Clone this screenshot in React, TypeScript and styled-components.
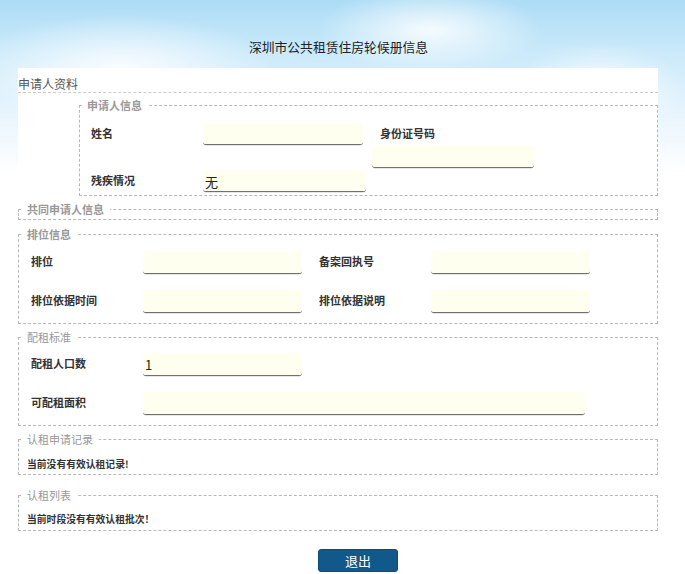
import styled, { createGlobalStyle } from 'styled-components';

const GlobalStyle = createGlobalStyle`
  html, body {
    margin: 0;
    padding: 0;
  }
  body {
    font-family: "Noto Sans CJK SC", "Noto Sans", sans-serif;
    color: #333;
    background-color: #fff;
    background-image:
      radial-gradient(ellipse 160px 60px at 430px 30px, rgba(255,255,255,0.85), rgba(255,255,255,0) 70%),
      radial-gradient(ellipse 120px 70px at 600px 90px, rgba(255,255,255,0.8), rgba(255,255,255,0) 70%),
      radial-gradient(ellipse 220px 80px at 120px 70px, rgba(255,255,255,0.9), rgba(255,255,255,0) 70%),
      linear-gradient(180deg, #acdcf6 0px, #c9e9fa 50px, #e8f5fd 115px, #ffffff 175px);
    background-repeat: no-repeat;
  }
`;

const Page = styled.div`
  width: 685px;
  min-height: 574px;
`;

const Title = styled.h1`
  margin: 0;
  padding: 38px 8px 0 0;
  height: 30px;
  line-height: 18px;
  text-align: center;
  font-size: 12.8px;
  font-weight: normal;
  color: #222;
`;

const Panel = styled.div`
  margin-left: 18px;
  width: 640px;
  background: #fff;
`;

const SectionHead = styled.div`
  padding-top: 8px;
  line-height: 16px;
  font-size: 12px;
  color: #555;
  border-bottom: 1px dashed #ccc;
`;

const Group = styled.fieldset<{ $indent?: number; $top: number; $pad: string }>`
  margin: ${(p) => p.$top}px 0 0 ${(p) => p.$indent ?? 0}px;
  padding: ${(p) => p.$pad};
  border: 1px dashed #b8b8b8;
  min-width: 0;
`;

const Legend = styled.legend<{ $bold?: boolean; $offset?: number }>`
  margin-left: ${(p) => p.$offset ?? 4}px;
  padding: 0 6px 0 4px;
  line-height: 14px;
  font-size: 11px;
  font-weight: ${(p) => (p.$bold ? 'bold' : 'normal')};
  color: #999;
`;

const Body = styled.div<{ $left: number }>`
  padding-left: ${(p) => p.$left}px;
`;

const Row = styled.div<{ $gap?: number }>`
  display: flex;
  align-items: flex-start;
  margin-top: ${(p) => p.$gap ?? 0}px;
`;

const Label = styled.div<{ $width?: number; $indent?: number }>`
  width: ${(p) => p.$width ?? 112}px;
  padding-left: ${(p) => p.$indent ?? 0}px;
  box-sizing: border-box;
  height: 22px;
  line-height: 20px;
  font-size: 11px;
  font-weight: bold;
  color: #333;
  flex-shrink: 0;
`;

const Field = styled.div<{ $width: number; $height?: number }>`
  width: ${(p) => p.$width}px;
  height: ${(p) => p.$height ?? 23}px;
  box-sizing: border-box;
  background: #fffff0;
  border-bottom: 1px solid #6f6f6f;
  border-radius: 3px;
  box-shadow: 0 1px 0 -0.5px #cfcfcf;
  padding: 3px 2px 0 2px;
  line-height: 18px;
  font-size: 13px;
  color: #222;
  flex-shrink: 0;
`;

const Stack = styled.div`
  display: flex;
  flex-direction: column;
  margin-left: 9px;
`;

const Notice = styled.div`
  padding-left: 8px;
  line-height: 16px;
  font-size: 9.8px;
  font-weight: bold;
  color: #333;
`;

const Footer = styled.div`
  display: flex;
  margin-top: 18px;
  padding-left: 318px;
`;

const ExitButton = styled.button`
  width: 80px;
  height: 23px;
  border: 1px solid #0b4d78;
  border-radius: 3px;
  background: #10598a;
  color: #fff;
  font-family: inherit;
  font-size: 13px;
  line-height: 20px;
  padding: 0;
  cursor: pointer;
`;

export default function App() {
  return (
    <>
      <GlobalStyle />
      <Page>
        <Title>深圳市公共租赁住房轮候册信息</Title>
        <Panel>
          <SectionHead>申请人资料</SectionHead>

          <Group $indent={61} $top={5} $pad="11px 0 3px 0">
            <Legend $bold $offset={3}>申请人信息</Legend>
            <Body $left={11}>
              <Row>
                <Label>姓名</Label>
                <Field $width={160} $height={22} />
                <Stack>
                  <Label $indent={8} $width={162}>身份证号码</Label>
                  <Field $width={162} />
                </Stack>
              </Row>
              <Row $gap={2}>
                <Label>残疾情况</Label>
                <Field $width={163} $height={22}>无</Field>
              </Row>
            </Body>
          </Group>

          <Group $top={6} $pad="0 0 3px 0">
            <Legend $bold>共同申请人信息</Legend>
          </Group>

          <Group $top={7} $pad="10px 0 10px 0">
            <Legend $bold>排位信息</Legend>
            <Body $left={12}>
              <Row>
                <Label>排位</Label>
                <Field $width={159} />
                <Label $width={129} $indent={17}>备案回执号</Label>
                <Field $width={159} />
              </Row>
              <Row $gap={16}>
                <Label>排位依据时间</Label>
                <Field $width={159} />
                <Label $width={129} $indent={17}>排位依据说明</Label>
                <Field $width={159} />
              </Row>
            </Body>
          </Group>

          <Group $top={6} $pad="9px 0 10px 0">
            <Legend>配租标准</Legend>
            <Body $left={12}>
              <Row>
                <Label>配租人口数</Label>
                <Field $width={159}>1</Field>
              </Row>
              <Row $gap={16}>
                <Label>可配租面积</Label>
                <Field $width={442} />
              </Row>
            </Body>
          </Group>

          <Group $top={6} $pad="10px 0 2px 0">
            <Legend>认租申请记录</Legend>
            <Notice>当前没有有效认租记录!</Notice>
          </Group>

          <Group $top={13} $pad="9px 0 3px 0">
            <Legend>认租列表</Legend>
            <Notice>当前时段没有有效认租批次！</Notice>
          </Group>
        </Panel>
        <Footer>
          <ExitButton>退出</ExitButton>
        </Footer>
      </Page>
    </>
  );
}
